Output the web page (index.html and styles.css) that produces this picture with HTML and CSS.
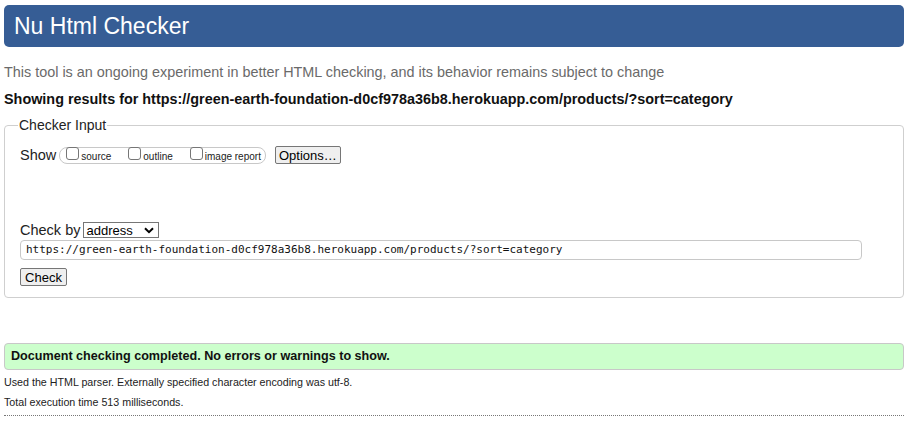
FILE: index.html
```html
<!DOCTYPE html>
<html lang="en">
<head>
<meta charset="utf-8">
<title>Nu Html Checker</title>
<link rel="stylesheet" href="styles.css">
</head>
<body>
<h1 class="brand">Nu Html Checker</h1>
<p class="intro">This tool is an ongoing experiment in better HTML checking, and its behavior remains subject to change</p>
<h2 class="showing">Showing results for https://green-earth-foundation-d0cf978a36b8.herokuapp.com/products/?sort=category</h2>
<fieldset class="input-set">
  <legend class="legend">Checker Input</legend>
  <div class="show-row">
    <span class="show-label">Show</span>
    <span class="pill">
      <span class="opt"><span class="cb"></span><span class="opt-text">source</span></span>
      <span class="opt"><span class="cb"></span><span class="opt-text">outline</span></span>
      <span class="opt"><span class="cb"></span><span class="opt-text">image report</span></span>
    </span>
    <span class="btn btn-options">Options…</span>
  </div>
  <div class="by-row">
    <span class="by-label">Check by</span>
    <span class="select"><span class="select-text">address</span><svg class="chev" width="10" height="7" viewBox="0 0 10 7"><path d="M1 1.2 L5 5.2 L9 1.2" fill="none" stroke="#000" stroke-width="2"/></svg></span>
  </div>
  <div class="url">https://green-earth-foundation-d0cf978a36b8.herokuapp.com/products/?sort=category</div>
  <div class="check-row"><span class="btn btn-check">Check</span></div>
</fieldset>
<div class="success">Document checking completed. No errors or warnings to show.</div>
<p class="meta meta-first">Used the HTML parser. Externally specified character encoding was utf-8.</p>
<p class="meta">Total execution time 513 milliseconds.</p>
<hr class="rule">
</body>
</html>
```
FILE: styles.css
```css
html, body {
  background: #fff;
}
body {
  margin: 0;
  padding: 5px 4px 0;
  font-family: "Liberation Sans", Arial, sans-serif;
  color: #000;
}
.brand {
  margin: 0;
  height: 42px;
  line-height: 42px;
  background: #365d95;
  border-radius: 5px;
  color: #fff;
  font-size: 23px;
  font-weight: normal;
  padding-left: 10px;
}
.intro {
  margin: 16px 0 0;
  font-size: 14.4px;
  line-height: 18px;
  color: #6a6a6a;
}
.showing {
  margin: 9px 0 0;
  font-size: 14.4px;
  line-height: 18px;
  font-weight: bold;
  color: #111;
}
.input-set {
  margin: 9px 0 0;
  border: 1px solid #cfcfcf;
  border-radius: 4px;
  padding: 0 15px 11px;
  min-width: 0;
}
.legend {
  font-size: 14px;
  line-height: 16px;
  padding: 0 1px;
  margin-left: -2px;
  color: #222;
}
.show-row {
  display: flex;
  align-items: center;
  margin-top: 13px;
  height: 18px;
}
.show-label {
  font-size: 14.5px;
  margin-right: 3px;
  color: #222;
}
.pill {
  display: flex;
  align-items: center;
  height: 15px;
  border: 1px solid #c8c8c8;
  border-radius: 8px;
  padding: 0 4px 0 6px;
  gap: 17px;
}
.opt {
  display: flex;
  align-items: center;
}
.cb {
  width: 11px;
  height: 11px;
  border: 1px solid #767676;
  border-radius: 3px;
  margin-right: 2px;
  margin-top: -3px;
  background: #fff;
}
.opt-text {
  font-size: 10px;
  color: #222;
  margin-top: 2px;
}
.btn {
  display: inline-flex;
  align-items: center;
  justify-content: center;
  background: #efefef;
  border: 1px solid #767676;
  border-radius: 2px;
  font-size: 13px;
  color: #000;
  box-sizing: border-box;
}
.btn-options {
  margin-left: 9px;
  width: 66px;
  height: 18px;
}
.by-row {
  display: flex;
  align-items: center;
  margin-top: 57px;
  height: 18px;
}
.by-label {
  font-size: 14.5px;
  margin-right: 3px;
  color: #222;
}
.select {
  display: flex;
  align-items: center;
  justify-content: space-between;
  box-sizing: border-box;
  width: 76px;
  height: 16px;
  border: 1px solid #767676;
  padding: 0 4px 0 2px;
  font-size: 13px;
}
.chev {
  display: block;
}
.url {
  margin-top: 1px;
  box-sizing: border-box;
  height: 20px;
  width: 842px;
  border: 1px solid #c8c8c8;
  border-radius: 4px;
  padding-left: 5px;
  font-family: "DejaVu Sans Mono", "Liberation Mono", monospace;
  font-size: 11px;
  line-height: 18px;
  color: #111;
}
.check-row {
  display: flex;
  margin-top: 8px;
}
.btn-check {
  width: 47px;
  height: 18px;
}
.success {
  margin-top: 45px;
  box-sizing: border-box;
  height: 27px;
  line-height: 25px;
  border: 1px solid #c8c8c8;
  border-radius: 4px;
  background: #ccffcc;
  padding-left: 6px;
  font-size: 12.6px;
  font-weight: bold;
  color: #111;
}
.meta {
  margin: 0;
  font-size: 10.7px;
  line-height: 13px;
  color: #222;
}
.meta-first {
  margin-top: 6px;
}
.meta + .meta {
  margin-top: 7px;
}
.rule {
  margin: 6px 0 0;
  border: 0;
  border-top: 1px dotted #777;
  height: 0;
}
```
